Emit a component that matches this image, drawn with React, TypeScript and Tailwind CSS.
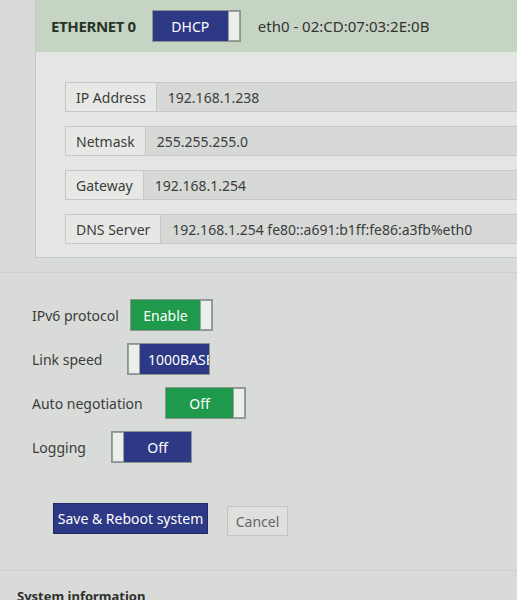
import React from "react";

interface ToggleProps {
  label: string;
  on: boolean;
  color: "green" | "blue";
  width?: string;
}

const Toggle: React.FC<ToggleProps> = ({label, on, color, width = "w-[83px]"}) => {
  const bg = color === "green" ? "bg-[#1f9a4c]" : "bg-[#2d3985]";
  const knob = (
    <div className="w-[12px] shrink-0 bg-[#eceeec] border border-[#9aa09c]"></div>
  );
  return (
    <div className={`flex h-[32px] ${width} border border-[#8d938f] overflow-hidden`}>
      {!on && knob}
      <div
        className={`flex-1 ${bg} flex items-center justify-center text-white text-[14px] whitespace-nowrap overflow-hidden`}>
        {label}
      </div>
      {on && knob}
    </div>
  );
};

const fields = [
  {label: "IP Address", value: "192.168.1.238"},
  {label: "Netmask", value: "255.255.255.0"},
  {label: "Gateway", value: "192.168.1.254"},
  {label: "DNS Server", value: "192.168.1.254 fe80::a691:b1ff:fe86:a3fb%eth0"},
];

export default function App() {
  return (
    <div
      className="w-[517px] h-[600px] overflow-hidden bg-[#d9dbd9] text-[#3a3d3b]"
      style={{fontFamily: '"Noto Sans", "Open Sans", sans-serif'}}>
      {/* ethernet panel */}
      <div className="ml-[35px] w-[520px] border-l border-b border-[#c6cac7] bg-[#e4e6e4]">
        <div className="h-[52px] bg-[#c6d4c3] flex items-center pl-[15px]">
          <span className="text-[15px] font-bold text-[#273327] tracking-tight">ETHERNET 0</span>
          <div className="ml-[16px]">
            <Toggle label="DHCP" on={true} color="blue" width="w-[89px]" />
          </div>
          <span className="ml-[17px] text-[15px] text-[#333]">eth0 - 02:CD:07:03:2E:0B</span>
        </div>
        <div className="pl-[29px] pt-[30px] pb-[13px] flex flex-col gap-[14px]">
          {fields.map((f) => (
            <div key={f.label} className="flex h-[30px] border border-[#c5c8c5]">
              <div className="px-[10px] flex items-center bg-[#e7e8e6] border-r border-[#c5c8c5] text-[14px]">
                {f.label}
              </div>
              <div className="flex-1 px-[11px] flex items-center bg-[#d7d9d7] text-[14px] text-[#3a3d3b] whitespace-nowrap">
                {f.value}
              </div>
            </div>
          ))}
        </div>
      </div>

      {/* settings */}
      <div className="mt-[14px] border-t border-[#cdd0cd] pt-[26px] pl-[32px] flex flex-col gap-[12px]">
        <div className="flex items-center">
          <span className="w-[98px] text-[14px]">IPv6 protocol</span>
          <Toggle label="Enable" on={true} color="green" />
        </div>
        <div className="flex items-center">
          <span className="w-[95px] text-[14px]">Link speed</span>
          <div className="flex h-[32px] w-[83px] border border-[#8d938f] overflow-hidden">
            <div className="w-[12px] shrink-0 bg-[#eceeec] border border-[#9aa09c]"></div>
            <div className="flex-1 bg-[#2d3985] flex items-center pl-[8px] text-white text-[14px] whitespace-nowrap overflow-hidden">
              1000BASE-T
            </div>
          </div>
        </div>
        <div className="flex items-center">
          <span className="w-[133px] text-[14px]">Auto negotiation</span>
          <Toggle label="Off" on={true} color="green" width="w-[81px]" />
        </div>
        <div className="flex items-center">
          <span className="w-[79px] text-[14px]">Logging</span>
          <Toggle label="Off" on={false} color="blue" width="w-[81px]" />
        </div>
      </div>

      <div className="mt-[38px] pl-[53px] flex items-center gap-[19px]">
        <button className="h-[31px] w-[155px] bg-[#2d3985] text-white text-[14px] border border-[#222a66]">
          Save &amp; Reboot system
        </button>
        <button className="h-[30px] w-[61px] mt-[5px] bg-[#dfe0de] border border-[#c2c5c2] text-[#666] text-[14px]">
          Cancel
        </button>
      </div>

      <div className="mt-[34px] border-t border-[#cdd0cd] pt-[12px] pl-[17px]">
        <span className="text-[13px] font-bold text-[#2e302e]">System information</span>
      </div>
    </div>
  );
}
